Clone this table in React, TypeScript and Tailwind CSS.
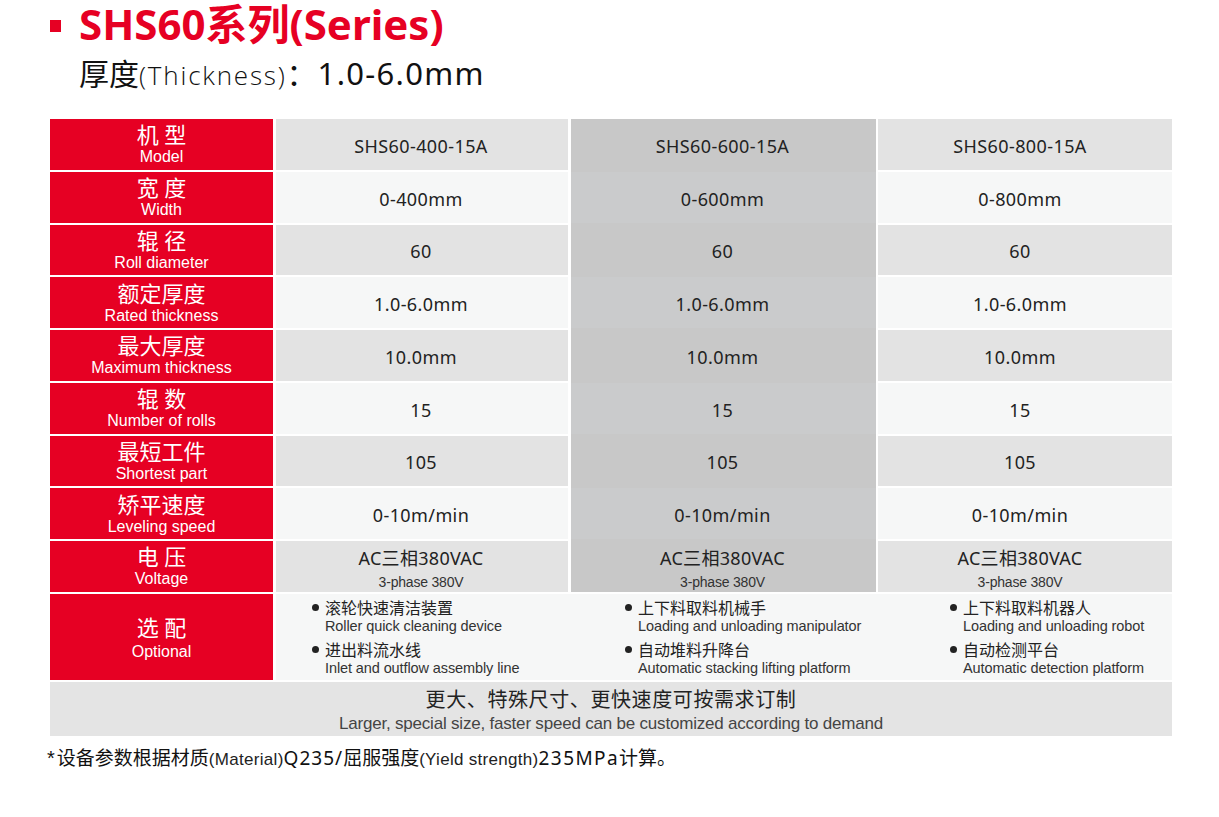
import React from "react";

const labels: [string, string][] = [
  ["机 型", "Model"],
  ["宽 度", "Width"],
  ["辊 径", "Roll diameter"],
  ["额定厚度", "Rated thickness"],
  ["最大厚度", "Maximum thickness"],
  ["辊 数", "Number of rolls"],
  ["最短工件", "Shortest part"],
  ["矫平速度", "Leveling speed"],
  ["电 压", "Voltage"],
];

const cols: string[][] = [
  ["SHS60-400-15A", "0-400mm", "60", "1.0-6.0mm", "10.0mm", "15", "105", "0-10m/min", "AC三相380VAC"],
  ["SHS60-600-15A", "0-600mm", "60", "1.0-6.0mm", "10.0mm", "15", "105", "0-10m/min", "AC三相380VAC"],
  ["SHS60-800-15A", "0-800mm", "60", "1.0-6.0mm", "10.0mm", "15", "105", "0-10m/min", "AC三相380VAC"],
];

const optional: [string, string][][] = [
  [
    ["滚轮快速清洁装置", "Roller quick cleaning device"],
    ["进出料流水线", "Inlet and outflow assembly line"],
  ],
  [
    ["上下料取料机械手", "Loading and unloading manipulator"],
    ["自动堆料升降台", "Automatic stacking lifting platform"],
  ],
  [
    ["上下料取料机器人", "Loading and unloading robot"],
    ["自动检测平台", "Automatic detection platform"],
  ],
];

function ValueCell({ v, bg, shift }: { v: string; bg: string; shift?: boolean }) {
  const isVolt = v.startsWith("AC");
  return (
    <div className={`h-[50.75px] flex flex-col items-center justify-center ${bg} ${shift ? "pr-[10px]" : "pr-[2px]"}`}>
      {isVolt ? (
        <div className="flex flex-col items-center pt-[5px]">
          <div className="text-[18px] leading-[24px] tracking-[0.3px]">{v}</div>
          <div className="text-[14px] leading-[20px] font-['Liberation_Sans',sans-serif] tracking-[-0.2px] text-[#333] pt-[2px]">3-phase 380V</div>
        </div>
      ) : (
        <div className="text-[18px] leading-[22px] tracking-[0.4px] pt-[3px]">{v}</div>
      )}
    </div>
  );
}

export default function App() {
  return (
    <div className="w-[1219px] h-[817px] bg-white font-['Noto_Sans','Noto_Sans_CJK_SC',sans-serif] text-[#222]">
      <div className="pl-[50px]">
        {/* Title */}
        <div className="flex items-center h-[48px]">
          <div className="w-[11px] h-[12px] bg-[#e60023] mt-[3px]" />
          <div className="ml-[18px] text-[42px] font-bold text-[#e60023] leading-[48px]">SHS60系列(Series)</div>
        </div>
        {/* Subtitle */}
        <div className="flex items-baseline h-[50px] pl-[29px] leading-[50px] text-[#111]">
          <span className="text-[30px]">厚度</span>
          <span className="text-[26px] font-light tracking-[1.8px] font-['Open_Sans',sans-serif]">(Thickness)</span>
          <span className="text-[30px]">：</span>
          <span className="text-[31px] tracking-[1.3px] ml-[1px]">1.0-6.0mm</span>
        </div>

        {/* Table */}
        <div className="mt-[21px] w-[1122px]">
          <div className="flex">
            <div className="w-[223px] flex flex-col gap-[2px]">
              {labels.map(([zh, en]) => (
                <div key={en} className="h-[50.75px] bg-[#e60023] text-white flex flex-col items-center justify-center">
                  <div className="text-[22px] leading-[24px] whitespace-pre">{zh}</div>
                  <div className="text-[16px] leading-[19px] font-['Liberation_Sans',sans-serif] pt-[1px]">{en}</div>
                </div>
              ))}
            </div>
            <div className="ml-[3px] w-[292px] flex flex-col gap-[2px]">
              {cols[0].map((v, i) => (
                <ValueCell key={i} v={v} bg={i % 2 === 0 ? "bg-[#e3e3e3]" : "bg-[#f6f7f7]"} />
              ))}
            </div>
            <div className="ml-[3px] w-[305px] flex flex-col gap-[2px] bg-[#c8c8c8]">
              {cols[1].map((v, i) => (
                <ValueCell key={i} v={v} bg={i % 2 === 0 ? "bg-[#c8c8c8]" : "bg-[#cacbcc]"} />
              ))}
            </div>
            <div className="ml-[2px] w-[294px] flex flex-col gap-[2px]">
              {cols[2].map((v, i) => (
                <ValueCell key={i} v={v} shift bg={i % 2 === 0 ? "bg-[#e3e3e3]" : "bg-[#f6f7f7]"} />
              ))}
            </div>
          </div>

          {/* Optional row */}
          <div className="flex mt-[2px] h-[86px]">
            <div className="w-[223px] bg-[#e60023] text-white flex flex-col items-center justify-center">
              <div className="text-[22px] leading-[30px] whitespace-pre">选 配</div>
              <div className="text-[16px] leading-[20px] font-['Liberation_Sans',sans-serif]">Optional</div>
            </div>
            <div className="ml-[3px] flex-1 bg-[#f6f7f7] flex">
              {optional.map((items, ci) => (
                <div
                  key={ci}
                  className={`flex flex-col gap-[5px] pt-[4px] ${
                    ci === 0 ? "w-[295px] pl-[36px]" : ci === 1 ? "w-[307px] pl-[54px]" : "flex-1 pl-[72px]"
                  }`}
                >
                  {items.map(([zh, en]) => (
                    <div key={en} className="flex">
                      <div className="w-[13px] h-[20px] flex items-center">
                        <div className="w-[7px] h-[7px] rounded-full bg-[#222]" />
                      </div>
                      <div className="flex flex-col">
                        <div className="text-[16px] leading-[20px]">{zh}</div>
                        <div className="text-[14.5px] leading-[17px] font-['Liberation_Sans',sans-serif] tracking-[-0.1px] text-[#333]">{en}</div>
                      </div>
                    </div>
                  ))}
                </div>
              ))}
            </div>
          </div>

          {/* Footer */}
          <div className="mt-[2px] h-[54px] bg-[#e4e4e4] flex flex-col items-center justify-center pt-[5px]">
            <div className="text-[20px] leading-[26px] tracking-[0.6px]">更大、特殊尺寸、更快速度可按需求订制</div>
            <div className="text-[17px] leading-[22px] font-['Liberation_Sans',sans-serif] text-[#444] tracking-[-0.2px]">
              Larger, special size, faster speed can be customized according to demand
            </div>
          </div>
        </div>

        {/* Note */}
        <div className="mt-[9px] -ml-[3px] flex items-baseline text-[19px] leading-[26px] text-[#111] whitespace-nowrap">
          <span className="font-['Liberation_Sans',sans-serif] text-[20px] mr-[2px]">*</span>
          <span>设备参数根据材质</span>
          <span className="text-[17px] font-['Liberation_Sans',sans-serif] tracking-[0.3px] text-[#222]">(Material)</span>
          <span className="tracking-[1px]">Q235/</span>
          <span>屈服强度</span>
          <span className="text-[17px] font-['Liberation_Sans',sans-serif] tracking-[0.3px] text-[#222]">(Yield strength)</span>
          <span className="tracking-[1.4px]">235MPa</span>
          <span>计算。</span>
        </div>
      </div>
    </div>
  );
}
